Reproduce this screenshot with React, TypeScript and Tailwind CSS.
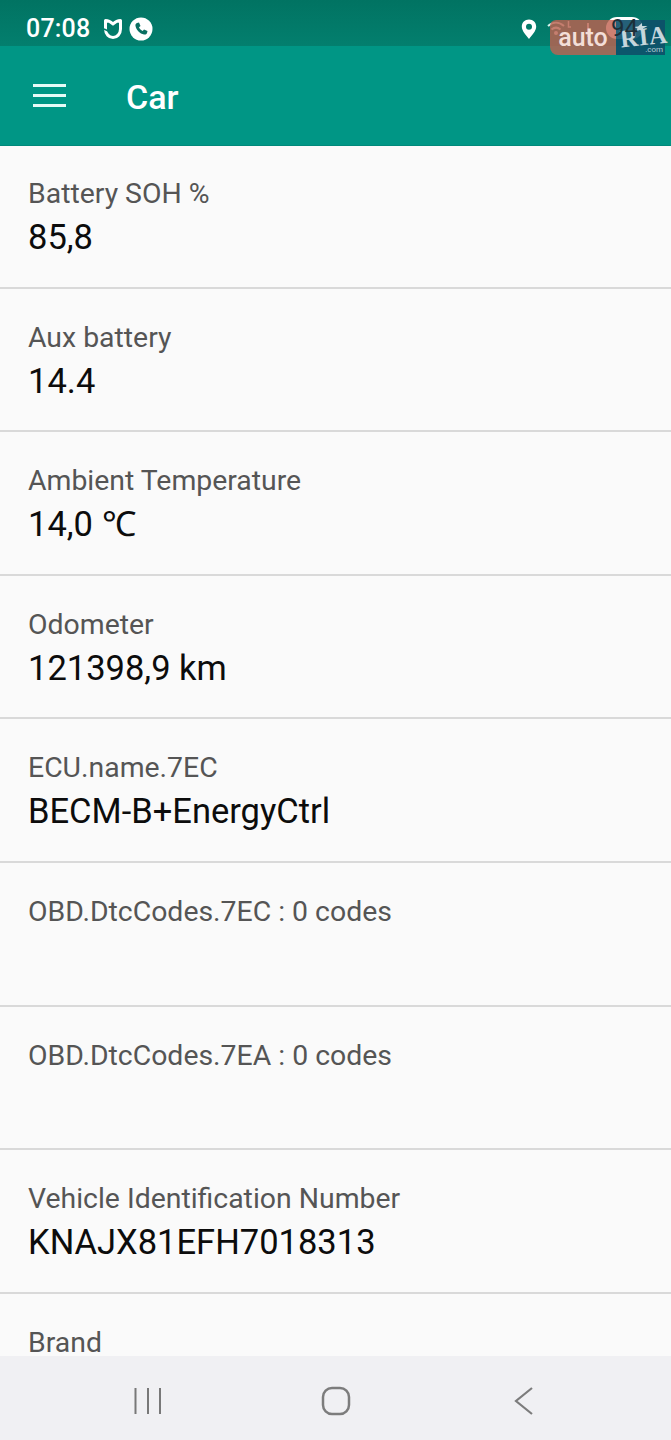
const rows = [
  { label: "Battery SOH %", value: "85,8" },
  { label: "Aux battery", value: "14.4" },
  { label: "Ambient Temperature", value: "14,0 ℃" },
  { label: "Odometer", value: "121398,9 km" },
  { label: "ECU.name.7EC", value: "BECM-B+EnergyCtrl" },
  { label: "OBD.DtcCodes.7EC : 0 codes", value: "" },
  { label: "OBD.DtcCodes.7EA : 0 codes", value: "" },
  { label: "Vehicle Identification Number", value: "KNAJX81EFH7018313" },
  { label: "Brand", value: "" },
];

const StatusBar = () => (
  <div className="relative flex h-[46px] shrink-0 items-start bg-gradient-to-b from-[#017362] to-[#037f6e] pl-[26px] pr-[28px] pt-[17px] text-white">
    <span className="text-[25px] font-medium leading-[24px] tracking-[0.2px]">07:08</span>
    <svg className="ml-[13px] mt-[1px]" width="20" height="22" viewBox="0 0 20 22" fill="none">
      <path d="M2.500 2.500 C5 2.500 7.500 3.500 10 6 C12.500 3.500 15 2.500 17.500 2.500 V11 C17.500 16 14 19.500 10 19.500 C6 19.500 2.500 16 2.500 11 Z" stroke="white" strokeWidth="3" strokeLinejoin="round" />
      <path d="M1 11 L6.500 13.500" stroke="#037a69" strokeWidth="1.500" />
    </svg>
    <svg className="ml-[6px]" width="24" height="24" viewBox="0 0 24 24">
      <circle cx="12" cy="12" r="11.500" fill="white" />
      <path d="M8 6 L10 5.500 L11.500 9 L10 10.300 C10.700 12 12 13.300 13.700 14 L15 12.500 L18.500 14 L18 16 C17.600 17.300 16.200 17.800 15 17.500 C10.800 16.600 7.400 13.200 6.500 9 C6.200 7.800 6.700 6.400 8 6 Z" fill="#0a6f62" />
    </svg>
    <div className="ml-auto flex items-start">
      <svg className="mt-[2px]" width="16" height="21" viewBox="0 0 16 21">
        <path fillRule="evenodd" d="M8 .5 C3.800 .5 .8 3.600 .8 7.600 C.8 12 5 16.500 8 20 C11 16.500 15.200 12 15.200 7.600 C15.200 3.600 12.200 .5 8 .5 Z M8 4.800 A3 3 0 1 1 8 10.800 A3 3 0 0 1 8 4.800 Z" fill="white" />
      </svg>
      <svg className="ml-[10px] mt-[3px]" width="26" height="16" viewBox="0 0 26 16" fill="none" stroke="#d8f3ee" strokeWidth="2">
        <path d="M1 6 C6 1.500 12 1.500 17 6 M4.500 9.500 C7.500 7 10.500 7 13.500 9.500" />
        <circle cx="9" cy="13" r="1" fill="#d8f3ee" />
        <path d="M21.500 1 V7 H24" strokeWidth="1.500" />
      </svg>
      <div className="ml-[14px] mt-[6px] h-[14px] w-[2px] bg-[#d8f3ee]" />
      <div className="ml-[17px] flex h-[22px] w-[37px] items-center justify-center rounded-full bg-white">
        <span className="relative z-10 text-[24px] leading-[22px] text-[#1c2f38]">94</span>
      </div>
    </div>
  </div>
);

const Toolbar = () => (
  <header className="flex h-[99px] shrink-0 items-start bg-[#009685] text-white shadow-[0_1px_0_#00897b]">
    <div className="mt-[38px] ml-[33px] flex w-[33px] flex-col gap-[7px]">
      <div className="h-[3px] bg-[#e6fbf7]" />
      <div className="h-[3px] bg-[#e6fbf7]" />
      <div className="h-[3px] bg-[#e6fbf7]" />
    </div>
    <h1 className="mt-[30px] ml-[60px] text-[34px] font-medium leading-[42px]">Car</h1>
  </header>
);

const Row = ({ label, value }: { label: string; value: string }) => (
  <div className="h-[143.6px] shrink-0 border-b-2 border-[#d9d9d9] pl-[28px] pt-[32px]">
    <div className="text-[28.4px] leading-[34px] text-[#555555]">{label}</div>
    <div className="mt-[6px] text-[34.5px] leading-[40px] text-[#0c0c0c]">{value}</div>
  </div>
);

const NavBar = () => (
  <nav className="absolute bottom-0 left-0 right-0 h-[84px] bg-[#f0f0f3]">
    <svg className="absolute left-[130px] top-[30px]" width="36" height="30" viewBox="0 0 36 30" fill="none" stroke="#787878" strokeWidth="2">
      <path d="M5.500 2 V28 M18 2 V28 M30 2 V28" />
    </svg>
    <svg className="absolute left-[318px] top-[30px]" width="36" height="30" viewBox="0 0 36 30" fill="none" stroke="#7c7c7c" strokeWidth="2.500">
      <rect x="5" y="2" width="26" height="26" rx="9" />
    </svg>
    <svg className="absolute left-[508px] top-[30px]" width="30" height="30" viewBox="0 0 30 30" fill="none" stroke="#7c7c7c" strokeWidth="2.200">
      <path d="M24 2 L8 15 L24 28" />
    </svg>
  </nav>
);

const Watermark = () => (
  <div className="absolute left-[550px] top-[20px] flex h-[35px] w-[115px] rounded-bl-[8px]">
    <div className="flex w-[66px] items-center justify-center rounded-tl-[6px] rounded-bl-[8px] bg-[#c0604f]/80 text-[25px] font-medium leading-none text-[#f3ded8]">auto</div>
    <div className="relative w-[49px] bg-[#0d4f69]/90">
      <span className="absolute left-[4px] top-[7px] -rotate-6 text-[25px] font-bold leading-[19px] tracking-[0.5px] text-[#c6d6dc] [font-family:'Liberation_Serif',serif]">RIA</span>
      <svg className="absolute left-[16px] top-[3px]" width="16" height="10" viewBox="0 0 16 10">
        <path d="M1 4 L6 3.500 L10 0 L10 3 L15.500 3 L11 5.500 L12 9 L8 6.500 L4 9 L5.500 5.500 Z" fill="#c6d6dc" />
      </svg>
      <span className="absolute right-[2px] top-[26px] text-[8px] leading-[8px] text-[#b7cbd3]">.com</span>
    </div>
  </div>
);

export default function App() {
  return (
    <div className="relative flex h-[1440px] w-[671px] flex-col overflow-hidden bg-[#fafafa] font-['Roboto',sans-serif]">
      <StatusBar />
      <Toolbar />
      <div className="flex flex-col">
        {rows.map((row) => (
          <Row key={row.label} label={row.label} value={row.value} />
        ))}
      </div>
      <NavBar />
      <Watermark />
    </div>
  );
}
